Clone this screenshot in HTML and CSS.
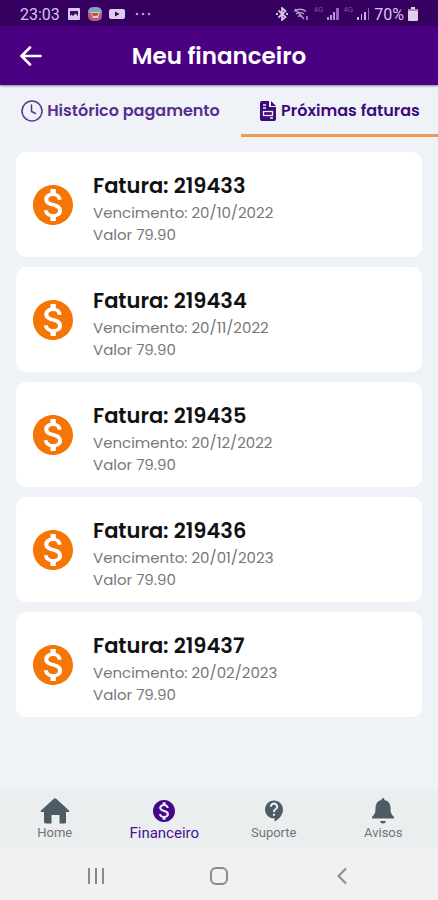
FILE: index.html
```html
<!DOCTYPE html>
<html lang="pt-BR">
<head>
  <meta charset="UTF-8" />
  <meta name="viewport" content="width=device-width, initial-scale=1" />
  <title>Meu financeiro</title>
  <link rel="stylesheet" href="styles.css">
</head>
<body>
  <!-- Shared icon shapes -->
  <svg class="sprite" aria-hidden="true">
    <symbol id="coin" viewBox="2 2 20 20">
      <path d="M12 2C6.48 2 2 6.48 2 12s4.48 10 10 10 10-4.48 10-10S17.52 2 12 2zm1.41 16.09V20h-2.67v-1.93c-1.71-.36-3.16-1.46-3.27-3.4h1.96c.1 1.05.82 1.87 2.65 1.87 1.96 0 2.4-.98 2.4-1.59 0-.83-.44-1.61-2.67-2.14-2.48-.6-4.18-1.62-4.18-3.67 0-1.72 1.39-2.84 3.11-3.21V4h2.67v1.95c1.86.45 2.79 1.86 2.85 3.39H14.3c-.05-1.11-.64-1.87-2.22-1.87-1.5 0-2.4.68-2.4 1.64 0 .84.65 1.39 2.67 1.91s4.18 1.39 4.18 3.91c-.01 1.83-1.38 2.83-3.12 3.16z"/>
    </symbol>
  </svg>

  <div class="status-bar">
    <div class="status-left">
      <span>23:03</span>
      <svg width="14" height="14" viewBox="0 0 14 14"><rect x="1" y="1" width="12" height="12" rx="1" fill="#d9c9ec"/><path d="M3 4h8v5L8.500 6.500 6 9 4.500 7.500 3 9z" fill="#3b0a66"/></svg>
      <svg width="14" height="14" viewBox="0 0 14 14"><rect width="14" height="14" rx="5" fill="#b0607a"/><path d="M0 6q0-6 7-6t7 6z" fill="#7fa3cf"/><path d="M2 5h10l-2 6H5z" fill="#e0c9c4"/><path d="M3 6h8l-2 3H5z" fill="#c0563c"/></svg>
      <svg width="16" height="12" viewBox="0 0 16 12"><rect y="1" width="16" height="10" rx="2" fill="#dccdec"/><path d="M6 3.500v5L10.500 6z" fill="#35005f"/></svg>
      <svg class="dots" width="16" height="4" viewBox="0 0 16 4" fill="#b79bd0"><circle cx="2" cy="2" r="1.300"/><circle cx="8" cy="2" r="1.300"/><circle cx="14" cy="2" r="1.300"/></svg>
    </div>
    <div class="status-right">
      <svg width="14" height="14" viewBox="0 0 14 14" fill="none" stroke="#d5c4e6" stroke-width="1.800"><path d="M3.500 3.500l7 6.500L7 13V1l3.500 3-7 6.500"/><path d="M1 7h2M11 7h2" stroke-width="2"/></svg>
      <svg width="16" height="14" viewBox="0 0 16 14" fill="none" stroke="#b79bd0" stroke-width="1.500"><path d="M1 4.500c3.500-3 8.500-3 12 0M3 7c2.500-2 5.500-2 8 0M5 9.500c1.500-1 2.500-1 4 0"/><path d="M2 2l9 10M14 9v4"/></svg>
      <span class="net">4G</span>
      <svg width="12" height="12" viewBox="0 0 12 12" fill="#b79bd0"><path d="M0 9h2v3H0zM3 7h2v5H3zM6 4h2v8H6z"/><path d="M9 0h3v12H9z" opacity=".7"/></svg>
      <span class="net">4G</span>
      <svg width="13" height="12" viewBox="0 0 13 12" fill="#c9b4dd"><path d="M0 9h2v3H0zM4 6h1v6H4zM7 4h2v8H7z"/><path d="M11 0h1v12h-1z" opacity=".6"/></svg>
      <span>70%</span>
      <svg width="10" height="14" viewBox="0 0 10 14"><path d="M3 0h4v2h2q1 0 1 1v10q0 1-1 1H1q-1 0-1-1V3q0-1 1-1h2z" fill="#ddd0e8"/><path d="M0 3q0-1 1-1h8q1 0 1 1v1H0z" fill="#a58bbd"/></svg>
    </div>
  </div>

  <header class="app-bar">
    <button class="back" aria-label="Voltar">
      <svg width="22" height="20" viewBox="0 0 22 20" fill="none" stroke="#fff" stroke-width="2.600" stroke-linecap="round" stroke-linejoin="round"><path d="M10 1.500L1.500 10l8.500 8.500M2 10h18.500"/></svg>
    </button>
    <h1>Meu financeiro</h1>
  </header>

  <nav class="tabs">
    <button class="tab">
      <svg width="22" height="22" viewBox="0 0 22 22" fill="none" stroke="#5a3590" stroke-width="1.500" stroke-linecap="round"><circle cx="11" cy="11" r="10"/><path d="M10.500 5v6.500l4 2"/></svg>
      Histórico pagamento
    </button>
    <button class="tab active">
      <svg width="18" height="22" viewBox="0 0 18 22"><path d="M3 1h7v6h7v12q0 2-2 2H3q-2 0-2-2V3q0-2 2-2z" fill="#3d0a7d"/><path d="M12 1l5 5h-5z" fill="#3d0a7d"/><path d="M4 5h3M4 8h3M11 18h3" stroke="#eef2f8" stroke-width="1.300"/><rect x="4.500" y="11.500" width="9" height="4" fill="none" stroke="#eef2f8" stroke-width="1.300"/></svg>
      Próximas faturas
    </button>
  </nav>

  <main class="invoices">
    <article class="card">
      <svg class="coin"><use href="#coin"/></svg>
      <div>
        <h2>Fatura: 219433</h2>
        <p>Vencimento: 20/10/2022</p>
        <p>Valor 79.90</p>
      </div>
    </article>
    <article class="card">
      <svg class="coin"><use href="#coin"/></svg>
      <div>
        <h2>Fatura: 219434</h2>
        <p>Vencimento: 20/11/2022</p>
        <p>Valor 79.90</p>
      </div>
    </article>
    <article class="card">
      <svg class="coin"><use href="#coin"/></svg>
      <div>
        <h2>Fatura: 219435</h2>
        <p>Vencimento: 20/12/2022</p>
        <p>Valor 79.90</p>
      </div>
    </article>
    <article class="card">
      <svg class="coin"><use href="#coin"/></svg>
      <div>
        <h2>Fatura: 219436</h2>
        <p>Vencimento: 20/01/2023</p>
        <p>Valor 79.90</p>
      </div>
    </article>
    <article class="card">
      <svg class="coin"><use href="#coin"/></svg>
      <div>
        <h2>Fatura: 219437</h2>
        <p>Vencimento: 20/02/2023</p>
        <p>Valor 79.90</p>
      </div>
    </article>
  </main>

  <nav class="bottom-nav">
    <a href="#home">
      <svg width="30" height="26" viewBox="0 0 30 26"><path d="M13.800.700q1.200-1 2.400 0L29 12.500q1 1.500-.8 1.500H26v10q0 1.500-1.500 1.500h-5V17h-8v8.500h-5Q4 25.500 4 24V14H1.800Q0 14 1 12.500z"/></svg>
      <span>Home</span>
    </a>
    <a href="#financeiro" class="active">
      <svg width="22" height="26" viewBox="0 -2 22 26"><use href="#coin" width="22" height="22"/></svg>
      <span>Financeiro</span>
    </a>
    <a href="#suporte">
      <svg width="20" height="26" viewBox="2 0 19 24"><path d="M11.5 2C6.810 2 3 5.810 3 10.500S6.810 19 11.500 19h.5v3c4.860-2.340 8-7 8-11.500C20 5.810 16.190 2 11.500 2zm1 14.500h-2v-2h2v2zm0-3.500h-2c0-3.250 3-3 3-5 0-1.100-.9-2-2-2s-2 .9-2 2h-2c0-2.210 1.790-4 4-4s4 1.790 4 4c0 2.500-3 2.750-3 5z"/></svg>
      <span>Suporte</span>
    </a>
    <a href="#avisos">
      <svg width="22" height="26" viewBox="0 0 22 26"><path d="M11 0q1.500 0 1.500 2c4 .8 6 4 6 8 0 5 1 6.500 3.500 9v1.500H0V19c2.500-2.500 3.500-4 3.500-9 0-4 2-7.200 6-8Q9.500 0 11 0zM8 23h6q-.5 2.500-3 2.500T8 23z"/></svg>
      <span>Avisos</span>
    </a>
  </nav>

  <div class="system-bar">
    <button aria-label="Recentes"><svg width="18" height="18" viewBox="0 0 18 18" stroke="#8a8a8a" stroke-width="2"><path d="M2 1v16M9 1v16M16 1v16"/></svg></button>
    <button aria-label="Início"><svg width="20" height="18" viewBox="0 0 20 18" fill="none" stroke="#8a8a8a" stroke-width="2"><rect x="2" y="1" width="16" height="16" rx="5"/></svg></button>
    <button aria-label="Voltar"><svg width="10" height="18" viewBox="0 0 10 18" fill="none" stroke="#8a8a8a" stroke-width="2"><path d="M9 1.500L1.500 9 9 16.500"/></svg></button>
  </div>
</body>
</html>
```

FILE: styles.css
```css
* {
  box-sizing: border-box;
}

body {
  margin: 0;
  min-height: 100vh;
  display: flex;
  flex-direction: column;
  font-family: 'Poppins', 'Inter', sans-serif;
  background: #eff3f8;
}

button {
  font: inherit;
  border: none;
  padding: 0;
  background: none;
  cursor: pointer;
}

svg {
  flex-shrink: 0;
}

h1, h2, p {
  margin: 0;
}

.sprite {
  display: none;
}

.status-bar {
  display: flex;
  justify-content: space-between;
  align-items: center;
  height: 26px;
  padding: 2px 20px 0;
  background: #35005f;
  color: #d5c4e6;
  font-family: 'Roboto', sans-serif;
  font-size: 16px;
}

.status-left,
.status-right {
  display: flex;
  align-items: center;
}

.status-left {
  gap: 7px;
}

.status-right {
  gap: 4px;
}

.dots {
  margin-left: 3px;
}

.net {
  align-self: flex-start;
  color: #7d55a0;
  font-size: 8px;
}

.app-bar {
  display: grid;
  grid-template-columns: 40px 1fr 40px;
  align-items: center;
  height: 59px;
  padding: 0 20px;
  background: #4b0082;
  box-shadow: 0 1px 2px rgba(40, 0, 80, 0.5);
}

.back {
  display: flex;
}

.app-bar h1 {
  color: #fff;
  font-size: 23px;
  font-weight: 600;
  line-height: 32px;
  text-align: center;
}

.tabs {
  display: grid;
  grid-template-columns: 11fr 9fr;
}

.tab {
  display: flex;
  justify-content: center;
  align-items: center;
  gap: 4px;
  height: 52px;
  padding-top: 2px;
  border-bottom: 3px solid transparent;
  color: #5a2d91;
  font-size: 16px;
  font-weight: 600;
  white-space: nowrap;
}

.tab.active {
  border-color: #ee9a55;
  color: #3d0a7d;
}

.invoices {
  flex: 1;
  display: flex;
  flex-direction: column;
  gap: 10px;
  padding: 15px 16px;
}

.card {
  display: flex;
  align-items: center;
  gap: 20px;
  height: 105px;
  padding: 0 17px;
  border-radius: 10px;
  background: #fff;
}

.coin {
  width: 40px;
  height: 40px;
  fill: #f57604;
}

.card div {
  padding-top: 7px;
}

.card h2 {
  color: #111;
  font-size: 21px;
  font-weight: 600;
  line-height: 32px;
}

.card p {
  color: #777;
  font-size: 15px;
  font-weight: 400;
  line-height: 22px;
}

.bottom-nav {
  display: grid;
  grid-template-columns: repeat(4, 1fr);
  height: 60px;
  padding-top: 10px;
  background: #ebeeee;
  font-family: 'Roboto', sans-serif;
}

.bottom-nav a {
  display: flex;
  flex-direction: column;
  align-items: center;
  color: #707478;
  font-size: 13px;
  line-height: 18px;
  text-decoration: none;
}

.bottom-nav svg {
  fill: #4d5b65;
}

.bottom-nav .active {
  color: #4b0f92;
  font-size: 15px;
}

.bottom-nav .active svg {
  fill: #43088a;
}

.system-bar {
  display: grid;
  grid-template-columns: repeat(3, 1fr);
  justify-items: center;
  align-items: center;
  height: 52px;
  padding: 4px 34px 0;
  background: #f1f1f1;
}

.system-bar button {
  display: flex;
}
```
